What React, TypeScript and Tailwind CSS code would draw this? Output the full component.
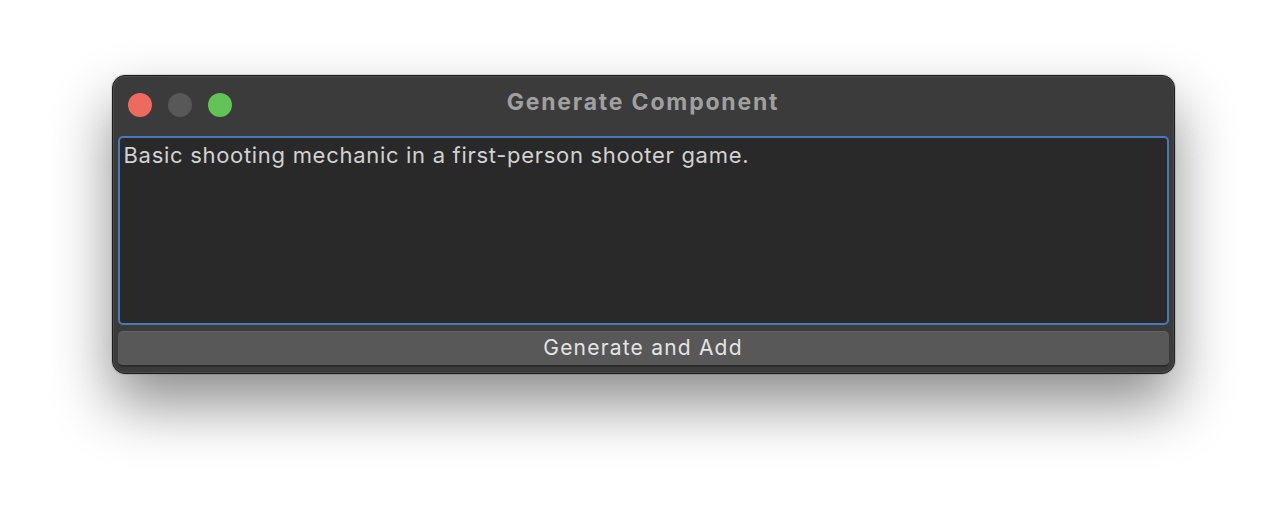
export default function App() {
  return (
    <div className="flex h-[520px] w-full justify-center bg-white pt-[75px] font-['Inter','Noto_Sans',sans-serif]">
      {/* Window */}
      <div className="flex h-fit w-[1063px] flex-col rounded-[13px] border border-[#1c1c1c] bg-[#3b3b3b] shadow-[0_30px_60px_rgba(0,0,0,0.45),0_0_0_1px_rgba(0,0,0,0.1)]">
        <div className="flex flex-col rounded-[12px] border border-[#565656]/60 px-[4px] pb-[5px]">
          {/* Title bar */}
          <div className="relative flex h-[59px] shrink-0 items-center">
            <div className="flex gap-4 pl-[10px] pb-[4px]">
              <span className="h-6 w-6 rounded-full bg-[#ed6a5e]" />
              <span className="h-6 w-6 rounded-full bg-[#585858]" />
              <span className="h-6 w-6 rounded-full bg-[#61c454]" />
            </div>
            <div className="absolute inset-x-0 top-[11px] text-center text-[23px] font-bold leading-[28px] tracking-[1.8px] text-[#a0a0a0]">
              Generate Component
            </div>
          </div>
          {/* Text area */}
          <div className="h-[189px] rounded-[5px] border-2 border-[#4a79bb] bg-[#292929] px-[4px] pt-[3px] text-[22px] leading-[28px] tracking-[0.7px] text-[#d2d2d2]">
            Basic shooting mechanic in a first-person shooter game.
          </div>
          {/* Button */}
          <button className="mt-[6px] h-[36px] rounded-[5px] border-t border-b-2 border-t-[#646464] border-b-[#2c2c2c] bg-[#585858] pb-[1px] text-[21px] leading-[32px] tracking-[1.2px] text-[#e4e4e4]">
            Generate and Add
          </button>
        </div>
      </div>
    </div>
  );
}
